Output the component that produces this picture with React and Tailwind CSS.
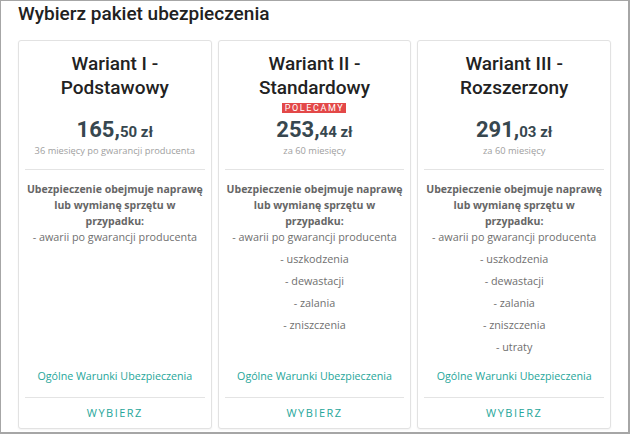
import React from "react";

const cards = [
  {
    t1: "Wariant I -",
    t2: "Podstawowy",
    big: "165,",
    small: "50 zł",
    sub: "36 miesięcy po gwarancji producenta",
    items: [],
  },
  {
    t1: "Wariant II -",
    t2: "Standardowy",
    badge: true,
    big: "253,",
    small: "44 zł",
    sub: "za 60 miesięcy",
    items: ["- uszkodzenia", "- dewastacji", "- zalania", "- zniszczenia"],
  },
  {
    t1: "Wariant III -",
    t2: "Rozszerzony",
    big: "291,",
    small: "03 zł",
    sub: "za 60 miesięcy",
    items: ["- uszkodzenia", "- dewastacji", "- zalania", "- zniszczenia", "- utraty"],
  },
];

function Card({ c }) {
  return (
    <div className="flex flex-col rounded-[3px] border border-[#e2e2e2] bg-white px-[6px] pt-[11px] pb-[7px] text-center shadow-[0_1px_2px_rgba(0,0,0,0.05)]">
      <div className="font-['Roboto',sans-serif] text-[19px] font-medium leading-[24px] text-[#222]">
        <div>{c.t1}</div>
        <div>{c.t2}</div>
      </div>
      <div className="mt-[3px] flex h-[10px] justify-center">
        {c.badge && (
          <span className="flex h-[10px] w-[64px] items-center justify-center bg-[#e34848] font-['Roboto',sans-serif] text-[9px] leading-[10px] tracking-[1.6px] text-white">
            POLECAMY
          </span>
        )}
      </div>
      <div className="mt-[5px] font-['Roboto',sans-serif] font-bold leading-[24px] text-[#37474f]">
        <span className="text-[22px]">{c.big}</span>
        <span className="text-[15px]">{c.small}</span>
      </div>
      <div className="font-['Open_Sans',sans-serif] text-[9.3px] leading-[14px] text-[#a0a0a0]">
        {c.sub}
      </div>
      <div className="mt-[11px] border-t border-[#e4e4e4]" />
      <div className="mt-[11px] font-['Open_Sans',sans-serif] text-[10.8px] leading-[16px] text-[#6f6f6f]">
        <div className="mx-[-4px] text-[10.5px] font-bold text-[#666]">
          Ubezpieczenie obejmuje naprawę
          <br />
          lub wymianę sprzętu w
          <br />
          przypadku:
        </div>
        <div>- awarii po gwarancji producenta</div>
        {c.items.map((it) => (
          <div key={it} className="mt-[6px]">
            {it}
          </div>
        ))}
      </div>
      <div className="mt-auto pt-[13px] font-['Open_Sans',sans-serif] text-[10.7px] leading-[16px] text-[#26a69a]">
        Ogólne Warunki Ubezpieczenia
      </div>
      <div className="mt-[13px] border-t border-[#e4e4e4]" />
      <div className="pt-[7px] font-['Open_Sans',sans-serif] text-[11px] leading-[16px] tracking-[1.5px] text-[#26a69a]">
        WYBIERZ
      </div>
    </div>
  );
}

export default function App() {
  return (
    <div className="box-border flex h-[434px] w-[630px] flex-col border-t border-l border-r-2 border-b-2 border-[#a6a6a6] bg-white px-[17px] pt-[1px] pb-[5px]">
      <h1 className="mb-[14px] font-['Roboto',sans-serif] text-[19px] font-medium leading-[24px] text-[#212121]">
        Wybierz pakiet ubezpieczenia
      </h1>
      <div className="grid flex-1 grid-cols-3 gap-[6px]">
        {cards.map((c) => (
          <Card key={c.t1} c={c} />
        ))}
      </div>
    </div>
  );
}
